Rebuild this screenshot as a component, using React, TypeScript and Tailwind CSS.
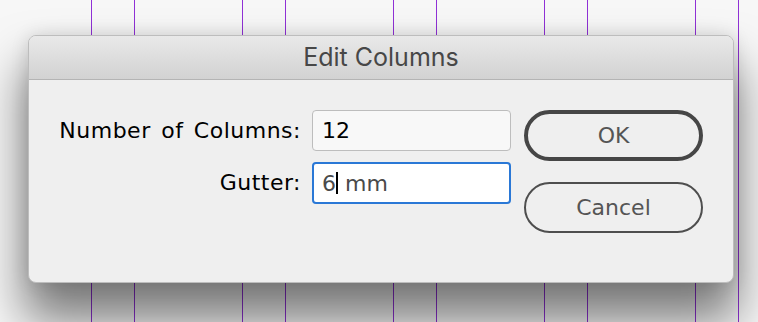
const guideGroups = [0, 1, 2, 3, 4];

function Guides() {
  return (
    <div className="absolute inset-0 flex pl-[91px]">
      {guideGroups.map((g) => (
        <div key={g} className="flex h-full">
          <div className="h-full w-px bg-[#9031d6]" />
          <div className="w-[42px]" />
          <div className="h-full w-px bg-[#9031d6]" />
          <div className="w-[107px]" />
        </div>
      ))}
    </div>
  );
}

export default function App() {
  const label = "text-[22px] text-black text-right leading-none tracking-[0.5px] [word-spacing:3px]";
  return (
    <div
      className="relative h-[322px] w-[758px] overflow-hidden bg-[#f7f7f7]"
      style={{ fontFamily: '"DejaVu Sans", "Liberation Sans", sans-serif' }}
    >
      <Guides />

      <div className="absolute left-[28px] top-[35px] flex h-[248px] w-[706px] flex-col overflow-hidden rounded-[8px] border border-[#bdbdbd] bg-[#efefef] shadow-[0_0_18px_rgba(0,0,0,0.12),0_34px_48px_4px_rgba(0,0,0,0.5)]">
        <div className="flex h-[44px] shrink-0 items-center justify-center border-b border-[#b4b4b4] bg-gradient-to-b from-[#e9e9e9] to-[#d2d2d2]">
          <span
            className="text-[25px] leading-none text-[#474747]"
            style={{ fontFamily: 'Inter, "Liberation Sans", sans-serif' }}
          >
            Edit Columns
          </span>
        </div>

        <div className="flex flex-1 justify-end gap-[13px] pr-[30px] pt-[30px]">
          <div className="grid grid-cols-[auto_199px] items-center gap-x-[11px] gap-y-[11px] self-start">
            <span className={label}>Number of Columns:</span>
            <div className="flex h-[41px] items-center rounded-[4px] border-[1.5px] border-[#bdbdbd] bg-[#f8f8f8] pl-[9px] text-[22px] text-black">
              12
            </div>

            <span className={label}>Gutter:</span>
            <div className="flex h-[42px] items-center rounded-[4px] border-2 border-[#2a78d6] bg-white pl-[8px] text-[22px] text-[#4a4a4a]">
              <span>6</span>
              <span className="h-[22px] w-[2px] bg-black" />
              <span className="whitespace-pre"> mm</span>
            </div>
          </div>

          <div className="flex w-[179px] flex-col gap-[21px]">
            <button className="flex h-[51px] items-center justify-center rounded-full border-[4px] border-[#464646] bg-[#efefef] text-[22px] text-[#555]">
              OK
            </button>
            <button className="flex h-[51px] items-center justify-center rounded-full border-2 border-[#4e4e4e] bg-[#efefef] text-[22px] text-[#555]">
              Cancel
            </button>
          </div>
        </div>
      </div>
    </div>
  );
}
